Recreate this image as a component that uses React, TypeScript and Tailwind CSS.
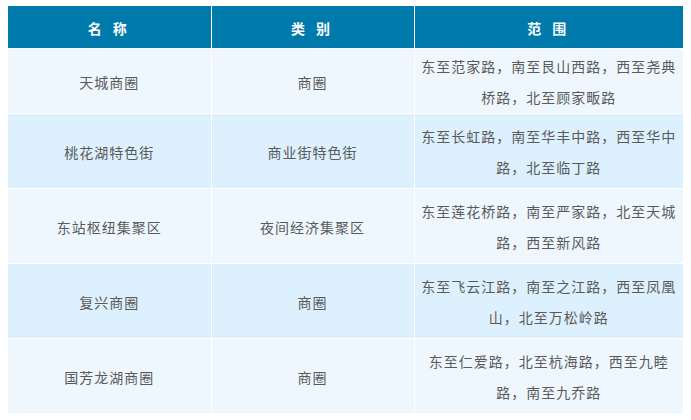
const rows = [
  { name: '天城商圈', type: '商圈', range: '东至范家路，南至艮山西路，西至尧典桥路，北至顾家畈路', h: 'h-[65px]' },
  { name: '桃花湖特色街', type: '商业街特色街', range: '东至长虹路，南至华丰中路，西至华中路，北至临丁路', h: 'h-[75px]' },
  { name: '东站枢纽集聚区', type: '夜间经济集聚区', range: '东至莲花桥路，南至严家路，北至天城路，西至新风路', h: 'h-[75px]' },
  { name: '复兴商圈', type: '商圈', range: '东至飞云江路，南至之江路，西至凤凰山，北至万松岭路', h: 'h-[75px]' },
  { name: '国芳龙湖商圈', type: '商圈', range: '东至仁爱路，北至杭海路，西至九睦路，南至九乔路', h: 'h-[75px]' },
]

export default function App() {
  return (
    <div
      className="w-[691px] h-[420px] bg-white pt-[6px] pl-[8px]"
      style={{ fontFamily: "'Noto Sans CJK SC', 'Noto Sans', sans-serif" }}
    >
      <table className="table-fixed border-collapse w-[675px] text-[14px] tracking-[1px] text-[#5a5a5a]">
        <colgroup>
          <col className="w-[203px]" />
          <col className="w-[203px]" />
          <col className="w-[269px]" />
        </colgroup>
        <thead>
          <tr className="h-[42px] bg-[#007aab] text-white font-bold">
            <th className="border-r border-white pt-1 tracking-[4px]">名 称</th>
            <th className="border-r border-white pt-1 tracking-[4px]">类 别</th>
            <th className="pt-1 tracking-[4px]">范 围</th>
          </tr>
        </thead>
        <tbody>
          {rows.map((r, i) => (
            <tr key={r.name} className={`${r.h} ${i % 2 === 0 ? 'bg-[#eef7fe]' : 'bg-[#dcf0fd]'}`}>
              <td className="border border-white border-l-0 text-center pt-1">{r.name}</td>
              <td className="border border-white text-center pt-1">{r.type}</td>
              <td className="border border-white border-r-0 text-center px-[6px] pt-[2px] leading-[31px]">{r.range}</td>
            </tr>
          ))}
        </tbody>
      </table>
    </div>
  )
}
